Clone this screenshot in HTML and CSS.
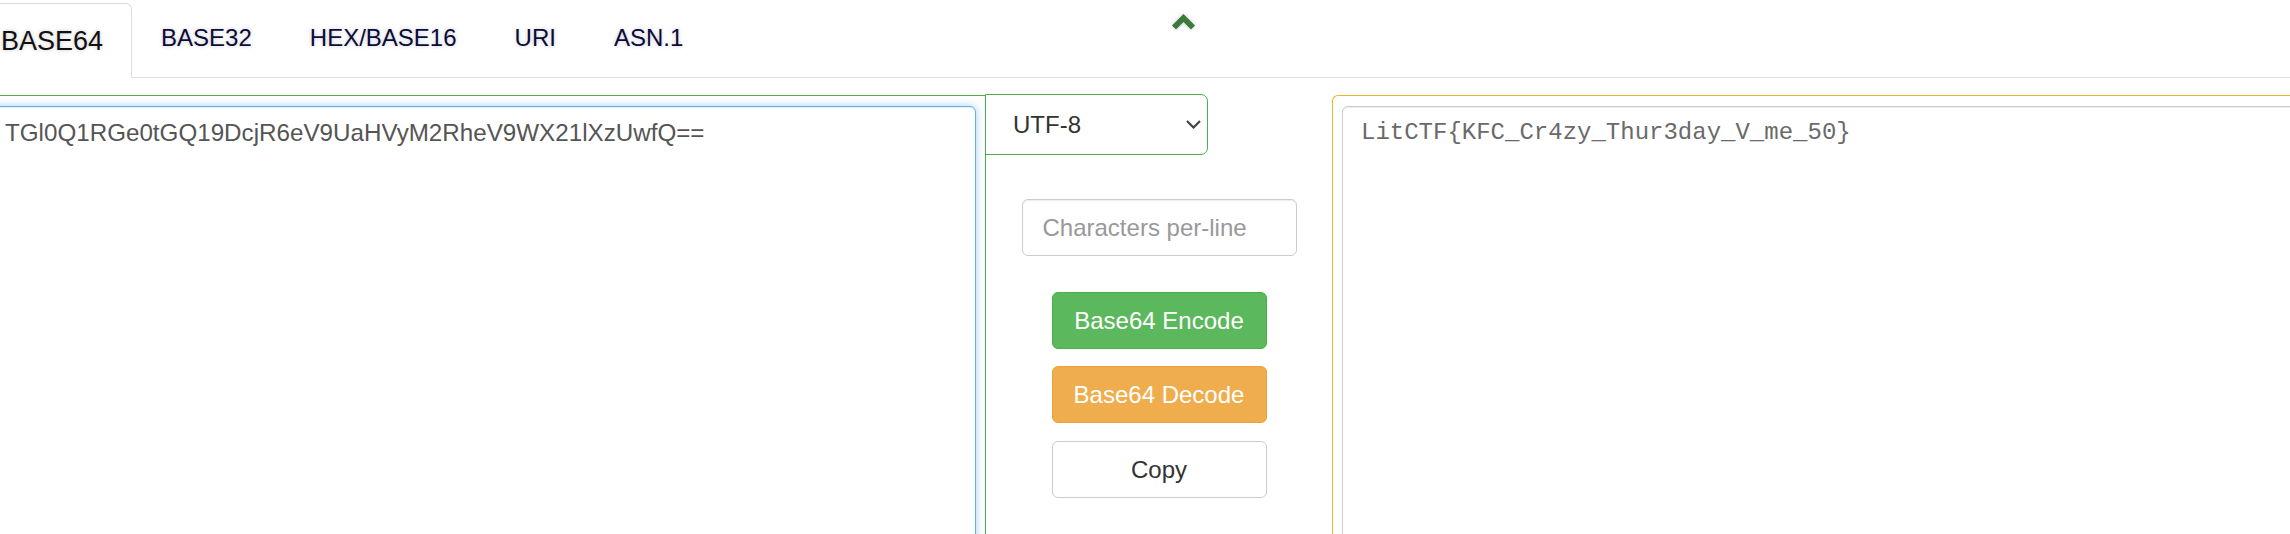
FILE: index.html
```html
<!DOCTYPE html>
<html lang="en">
<head>
<meta charset="utf-8">
<title>Base64 Encode / Decode</title>
<link rel="stylesheet" href="styles.css">
</head>
<body>
<div class="page">
  <nav class="tabs">
    <ul class="tab-list">
      <li><a class="tab active" href="#">BASE64</a></li>
      <li><a class="tab" href="#">BASE32</a></li>
      <li><a class="tab" href="#">HEX/BASE16</a></li>
      <li><a class="tab" href="#">URI</a></li>
      <li><a class="tab" href="#">ASN.1</a></li>
    </ul>
    <button class="toggle" type="button" aria-label="collapse">
      <svg width="24" height="17" viewBox="0 0 24 17"><polygon points="11.5,0 23,11.5 19,15.5 11.5,8 4,15.5 0,11.5" fill="#3b7a3b"/></svg>
    </button>
  </nav>
  <main class="work">
    <section class="pane pane-input">
      <textarea class="field field-input" spellcheck="false">TGl0Q1RGe0tGQ19DcjR6eV9UaHVyM2RheV9WX21lXzUwfQ==</textarea>
    </section>
    <section class="pane pane-controls">
      <div class="charset">
        <span>UTF-8</span>
        <svg width="15" height="9" viewBox="0 0 15 9"><polyline points="1,1 7.5,7.5 14,1" fill="none" stroke="#444" stroke-width="2.2"/></svg>
      </div>
      <input class="per-line" type="text" placeholder="Characters per-line">
      <button class="btn btn-encode" type="button">Base64 Encode</button>
      <button class="btn btn-decode" type="button">Base64 Decode</button>
      <button class="btn btn-copy" type="button">Copy</button>
    </section>
    <section class="pane pane-output">
      <textarea class="field field-output" spellcheck="false" readonly>LitCTF{KFC_Cr4zy_Thur3day_V_me_50}</textarea>
    </section>
  </main>
</div>
</body>
</html>
```
FILE: styles.css
```css
* { box-sizing: border-box; }

html, body {
  margin: 0;
  background: #fff;
  height: 534px;
  overflow: hidden;
}

body {
  font-family: "Liberation Sans", Arial, sans-serif;
  color: #333;
}

.page {
  margin-left: -30px;
  width: 2500px;
}

/* ---------- tabs ---------- */
.tabs {
  display: flex;
  align-items: flex-start;
  padding-top: 3px;
  border-bottom: 1px solid #ddd;
}

.tab-list {
  display: flex;
  align-items: flex-start;
  list-style: none;
  margin: 0;
  padding: 0;
}

.tab-list li {
  margin-bottom: -1px;
}

.tab {
  display: block;
  padding: 16.5px 28px;
  font-size: 24px;
  line-height: 34px;
  color: #0b0b3b;
  text-decoration: none;
  text-shadow: 0 0 4px rgba(0, 0, 0, 0.22);
  border: 1px solid transparent;
  border-radius: 6px 6px 0 0;
}

.tab.active {
  font-size: 27px;
  line-height: 38px;
  padding: 17.5px 28px 17.5px 30px;
  color: #111;
  background: #fff;
  border-color: #ddd #ddd transparent #ddd;
}

.toggle {
  display: block;
  margin: 11px 0 0 460px;
  padding: 0;
  width: 24px;
  height: 17px;
  border: 0;
  background: none;
  filter: drop-shadow(0 0 2px rgba(0, 0, 0, 0.2));
}

.toggle svg { display: block; }

/* ---------- work area ---------- */
.work {
  display: grid;
  grid-template-columns: 1016px 346px 1100px;
  margin-top: 17px;
  height: 460px;
}

.pane-input {
  border-top: 1px solid #4cae4c;
  border-right: 1px solid #4cae4c;
  padding: 10px 9px 0 16px;
}

.field {
  display: block;
  width: 100%;
  height: 600px;
  resize: none;
  outline: none;
  border-radius: 6px;
}

.field-input {
  border: 1px solid #66afe9;
  box-shadow: inset 0 1px 1px rgba(0, 0, 0, 0.075), 0 0 8px rgba(102, 175, 233, 0.6);
  padding: 9px 18px;
  font: 24.2px/34.3px "Liberation Sans", Arial, sans-serif;
  color: #555;
}

.pane-controls {
  display: flex;
  flex-direction: column;
  align-items: center;
}

.charset {
  align-self: flex-start;
  margin: -1px 0 0 -1px;
  width: 223px;
  height: 61px;
  display: flex;
  align-items: center;
  justify-content: space-between;
  padding: 0 6px 0 27px;
  border: 1px solid #4cae4c;
  border-radius: 0 7px 7px 0;
  font-size: 24px;
  color: #333;
}

.charset svg { display: block; }

.per-line {
  margin-top: 44px;
  width: 275px;
  height: 57px;
  padding: 0 20px;
  border: 1px solid #ccc;
  border-radius: 6px;
  box-shadow: inset 0 1px 1px rgba(0, 0, 0, 0.075);
  font: 24px "Liberation Sans", Arial, sans-serif;
  color: #555;
  outline: none;
}

.per-line::placeholder { color: #999; }

.btn {
  width: 215px;
  height: 57px;
  border: 1px solid;
  border-radius: 6px;
  font: 24px "Liberation Sans", Arial, sans-serif;
  padding: 0;
}

.btn-encode {
  margin-top: 36px;
  background: #5cb85c;
  border-color: #4cae4c;
  color: #fff;
}

.btn-decode {
  margin-top: 17px;
  background: #f0ad4e;
  border-color: #eea236;
  color: #fff;
}

.btn-copy {
  margin-top: 18px;
  background: #fff;
  border-color: #ccc;
  color: #333;
}

.pane-output {
  border-top: 1px solid #e6b730;
  border-left: 1px solid #e6b730;
  border-top-left-radius: 6px;
  padding: 10px 0 0 9px;
}

.field-output {
  width: 1200px;
  border: 1px solid #ccc;
  box-shadow: inset 0 1px 1px rgba(0, 0, 0, 0.075);
  padding: 9px 18px;
  font: 24px/34.3px "Liberation Mono", "Courier New", monospace;
  color: #6a6a6a;
}
```
